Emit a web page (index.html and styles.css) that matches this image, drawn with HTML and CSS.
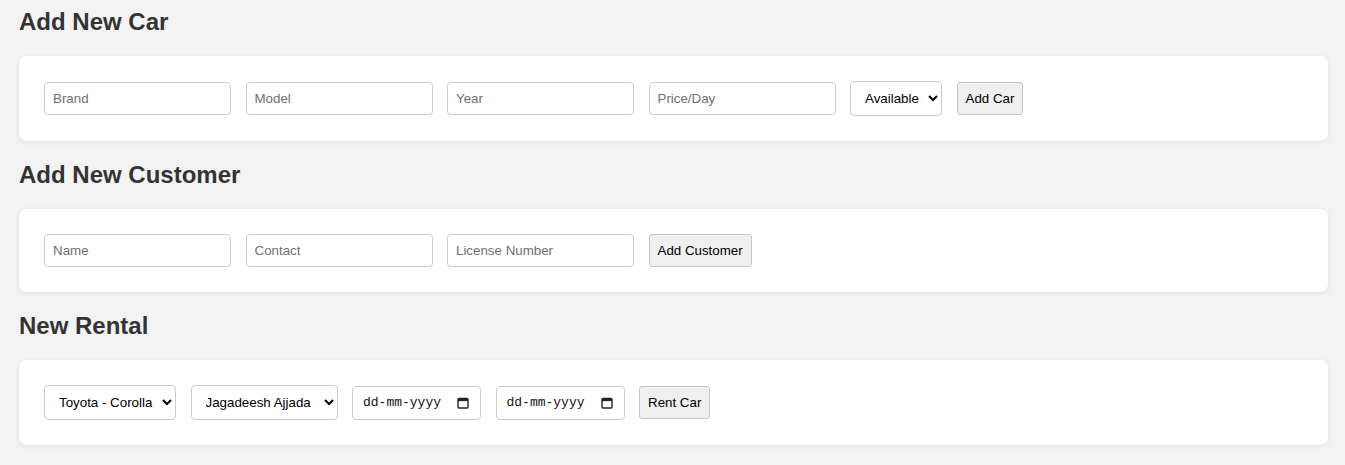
FILE: index.html
```html
<!DOCTYPE html>
<html lang="en">
<head>
<meta charset="utf-8">
<title>Car Rental</title>
<link rel="stylesheet" href="styles.css">
</head>
<body>
  <h2 class="section-title">Add New Car</h2>
  <div class="card">
    <input class="field" type="text" placeholder="Brand">
    <input class="field" type="text" placeholder="Model">
    <input class="field" type="text" placeholder="Year">
    <input class="field" type="text" placeholder="Price/Day">
    <select class="pick pick-status">
      <option>Available</option>
      <option>Rented</option>
    </select>
    <button class="btn" type="button">Add Car</button>
  </div>

  <h2 class="section-title">Add New Customer</h2>
  <div class="card">
    <input class="field" type="text" placeholder="Name">
    <input class="field" type="text" placeholder="Contact">
    <input class="field" type="text" placeholder="License Number">
    <button class="btn" type="button">Add Customer</button>
  </div>

  <h2 class="section-title">New Rental</h2>
  <div class="card">
    <select class="pick pick-car">
      <option>Toyota - Corolla</option>
    </select>
    <select class="pick pick-customer">
      <option>Jagadeesh Ajjada</option>
    </select>
    <div class="date-field">
      <span class="date-text">dd-mm-yyyy</span>
      <svg class="cal" width="12" height="12" viewBox="0 0 12 12" aria-hidden="true">
        <rect x="1" y="1.5" width="10" height="9.5" rx="1" fill="none" stroke="#222" stroke-width="1.4"/>
        <rect x="1" y="1.5" width="10" height="2.6" fill="#222"/>
      </svg>
    </div>
    <div class="date-field">
      <span class="date-text">dd-mm-yyyy</span>
      <svg class="cal" width="12" height="12" viewBox="0 0 12 12" aria-hidden="true">
        <rect x="1" y="1.5" width="10" height="9.5" rx="1" fill="none" stroke="#222" stroke-width="1.4"/>
        <rect x="1" y="1.5" width="10" height="2.6" fill="#222"/>
      </svg>
    </div>
    <button class="btn" type="button">Rent Car</button>
  </div>
</body>
</html>
```

FILE: styles.css
```css
html, body {
  background: #f3f3f3;
}

body {
  margin: 0;
  padding: 8px 17px 0 19px;
  font-family: "Liberation Sans", Arial, sans-serif;
  color: #333;
}

.section-title {
  margin: 0 0 20px;
  font-size: 24px;
  font-weight: bold;
  line-height: normal;
  color: #333;
}

.card {
  display: flex;
  align-items: center;
  gap: 14.5px;
  background: #fff;
  border-radius: 8px;
  padding: 25px;
  margin-bottom: 20px;
  box-shadow: 0 1px 6px rgba(0, 0, 0, 0.08);
}

.field {
  box-sizing: border-box;
  width: 187px;
  height: 33px;
  padding: 0 8px;
  border: 1px solid #ccc;
  border-radius: 4px;
  font-family: "Liberation Sans", Arial, sans-serif;
  font-size: 13.333px;
  color: #000;
  background: #fff;
  outline: none;
}

.field::placeholder {
  color: #707070;
}

.pick {
  box-sizing: border-box;
  height: 35px;
  padding: 0 6px 0 10px;
  border: 1px solid #ccc;
  border-radius: 4px;
  font-family: "Liberation Sans", Arial, sans-serif;
  font-size: 13.333px;
  color: #000;
  background: #fff;
}

.pick-status { width: 92px; }
.pick-car { width: 132px; }
.pick-customer { width: 147px; }

.date-field {
  box-sizing: border-box;
  width: 129px;
  height: 34px;
  display: flex;
  align-items: center;
  justify-content: space-between;
  padding: 0 11px 0 10px;
  border: 1px solid #ccc;
  border-radius: 4px;
  background: #fff;
}

.date-text {
  font-family: "Liberation Mono", "DejaVu Sans Mono", monospace;
  font-size: 13px;
  color: #111;
}

.cal {
  display: block;
}

.btn {
  box-sizing: border-box;
  height: 33px;
  padding: 0 8px;
  border: 1px solid #c6c6c6;
  border-radius: 3px;
  background: #efefef;
  font-family: "Liberation Sans", Arial, sans-serif;
  font-size: 13.333px;
  color: #000;
}
```
